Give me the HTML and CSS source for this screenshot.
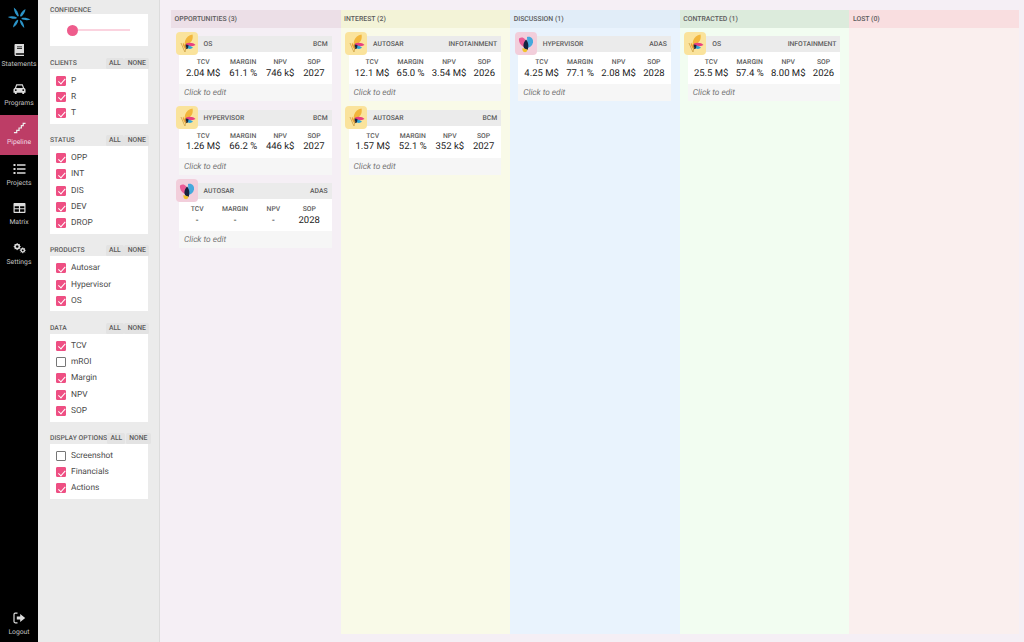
FILE: index.html
```html
<!DOCTYPE html>
<html lang="en">
<head>
<meta charset="utf-8">
<title>Pipeline</title>
<link rel="stylesheet" href="styles.css">
</head>
<body>
<svg class="defs" width="0" height="0" aria-hidden="true">
  <symbol id="mark-yellow" viewBox="0 0 22 23">
    <path d="M10 18C7 11 9 4 16.500 2.500C17.500 7 15.500 10 13 11.500Z" fill="#f2b63c"/>
    <path d="M9 17C7 14 6.500 12.500 7 10.500L10 15Z" fill="#eda33a"/>
    <path d="M10 11.500C13 10 17.500 10.500 19.500 13C16 14.800 12.500 14.500 10 13Z" fill="#e9407f"/>
    <path d="M11 13.500C13 13.500 15.500 14 17 15.800C15 17.300 13 17.300 11.500 16Z" fill="#2fa6d8"/>
    <path d="M9.500 12.500L12.500 13L12 16.500L10 17Z" fill="#16263f"/>
    <path d="M5 11L8 18L9 20M10 15L9 20" fill="none" stroke="#c89a3a" stroke-width=".7"/>
  </symbol>
  <symbol id="mark-pink" viewBox="0 0 22 23">
    <path d="M4 6.500C8 4 11 7 11.500 12L9 15C5.500 13.500 3.500 10 4 6.500Z" fill="#ea5c96"/>
    <path d="M12 5C16 4 18.500 7 18 10.500C17.500 13.500 15 15.500 12.500 16Z" fill="#45a9dc"/>
    <path d="M11 7.500C13.500 10 14 14.500 12.500 18C10 18 8 15.500 8.500 12.500C8.800 10.500 10 8.500 11 7.500Z" fill="#15233f"/>
    <path d="M7.500 16L12.500 17.500C12.500 19.500 10.800 20.500 9 20C7.800 19.500 7 18 7.500 16Z" fill="#f1c22f"/>
  </symbol>
</svg>
<div class="app">
  <nav class="rail">
    <div class="logo">
      <svg width="24" height="24" viewBox="0 0 24 24">
        <g fill="#2c95c9">
          <path d="M10.800 10.500C9 9 7 6 6.800 1.500C9.500 3.500 11.300 6.500 11.800 10Z"/>
          <path d="M13 10C13.500 7.500 15 4.800 18.500 3C18.300 6 16.500 9 14 10.700Z"/>
          <path d="M14.700 12C17 11.300 20 11.500 23.500 13.500C20.500 14.700 17 14.200 14.500 13Z"/>
          <path d="M13.600 14C15.500 15.500 17 18 17.300 22C15 20.500 13.200 17.500 12.800 14.500Z"/>
          <path d="M11.300 14.300C10.800 17 9.300 19.800 6 21.500C6.200 18.500 8 15.500 10.300 13.700Z"/>
          <path d="M9.500 12.400C7.500 13 4.200 13 .8 11C3.800 9.800 7.200 10.200 9.700 11.300Z"/>
        </g>
      </svg>
    </div>
    <a class="nav-item">
      <svg class="nav-icon" viewBox="0 0 12 12"><path fill="#ddd" d="M2 0H10.500V9.200H3C2.400 9.200 2.200 9.600 2.200 10S2.400 10.800 3 10.800H10.500V12H2.500C1.500 12 1 11.200 1 10.200V1.200C1 .5 1.400 0 2 0Z"/><path fill="#000" d="M3.500 2.500H8.500V3.300H3.500ZM3.500 4.300H8.500V5.100H3.500Z"/></svg>
      <span>Statements</span>
    </a>
    <a class="nav-item">
      <svg class="nav-icon" viewBox="0 0 14 12"><path fill="#ddd" d="M3.500 1H10.500L12 5C13 5.300 13.500 6 13.500 7V10H12V11.500H10V10H4V11.500H2V10H.5V7C.5 6 1 5.300 2 5ZM4.300 2.300L3.400 5H10.600L9.700 2.300ZM3 6.200A1 1 0 1 0 3 8.200A1 1 0 1 0 3 6.200ZM11 6.200A1 1 0 1 0 11 8.200A1 1 0 1 0 11 6.200Z" fill-rule="evenodd"/></svg>
      <span>Programs</span>
    </a>
    <a class="nav-item nav-active">
      <svg class="nav-icon" viewBox="0 0 14 12"><path fill="none" stroke="#eee" stroke-width="1.300" d="M1 11H4V8.500H6.500V6H9V3.500H11V1H13.500"/></svg>
      <span>Pipeline</span>
    </a>
    <a class="nav-item">
      <svg class="nav-icon" viewBox="0 0 13 12"><path fill="#ddd" d="M.5 1H2.500V3H.5ZM.5 5H2.500V7H.5ZM.5 9H2.500V11H.5ZM4 1.200H12.500V2.800H4ZM4 5.200H12.500V6.800H4ZM4 9.200H12.500V10.800H4Z"/></svg>
      <span>Projects</span>
    </a>
    <a class="nav-item">
      <svg class="nav-icon" viewBox="0 0 13 12"><path fill="#ddd" fill-rule="evenodd" d="M1.500 1H11.500C12.100 1 12.500 1.400 12.500 2V10C12.500 10.600 12.100 11 11.500 11H1.500C.9 11 .5 10.600 .5 10V2C.5 1.400 .9 1 1.500 1ZM1.700 4.200V6.200H5.900V4.200ZM7.100 4.200V6.200H11.300V4.200ZM1.700 7.300V9.800H5.900V7.300ZM7.100 7.300V9.800H11.300V7.300Z"/></svg>
      <span>Matrix</span>
    </a>
    <a class="nav-item">
      <svg class="nav-icon" viewBox="0 0 14 12">
        <circle cx="4.500" cy="4.500" r="2.400" fill="none" stroke="#ddd" stroke-width="1.600"/>
        <path d="M4.500 .7V8.300M.7 4.500H8.300M1.800 1.800L7.200 7.200M7.200 1.800L1.800 7.200" stroke="#ddd" stroke-width="1"/>
        <circle cx="4.500" cy="4.500" r="1.300" fill="#000"/>
        <circle cx="10.500" cy="8.500" r="1.900" fill="none" stroke="#ddd" stroke-width="1.400"/>
        <path d="M10.500 5.300V11.700M7.300 8.500H13.700M8.300 6.300L12.700 10.700M12.700 6.300L8.300 10.700" stroke="#ddd" stroke-width=".9"/>
        <circle cx="10.500" cy="8.500" r="1" fill="#000"/>
      </svg>
      <span>Settings</span>
    </a>
    <a class="nav-item nav-logout">
      <svg class="nav-icon" viewBox="0 0 13 12"><path fill="none" stroke="#ddd" stroke-width="1.200" d="M4.500 1.200H2.200C1.400 1.200 1 1.700 1 2.400V9.600C1 10.300 1.400 10.800 2.200 10.800H4.500"/><path fill="#ddd" d="M3.800 4.600H7.200V2L12.200 6L7.200 10V7.400H3.800Z"/></svg>
      <span>Logout</span>
    </a>
  </nav>

  <aside class="filters">
    <section class="filter">
      <header class="filter-head filter-head-plain"><h2>Confidence</h2></header>
      <div class="box slider-box">
        <span class="slider-thumb"></span>
        <span class="slider-track"></span>
      </div>
    </section>

    <section class="filter">
      <header class="filter-head"><h2>Clients</h2><div class="btns"><button>All</button><button>None</button></div></header>
      <div class="box">
        <label class="row"><i class="cb on"></i>P</label>
        <label class="row"><i class="cb on"></i>R</label>
        <label class="row"><i class="cb on"></i>T</label>
      </div>
    </section>

    <section class="filter">
      <header class="filter-head"><h2>Status</h2><div class="btns"><button>All</button><button>None</button></div></header>
      <div class="box">
        <label class="row"><i class="cb on"></i>OPP</label>
        <label class="row"><i class="cb on"></i>INT</label>
        <label class="row"><i class="cb on"></i>DIS</label>
        <label class="row"><i class="cb on"></i>DEV</label>
        <label class="row"><i class="cb on"></i>DROP</label>
      </div>
    </section>

    <section class="filter">
      <header class="filter-head"><h2>Products</h2><div class="btns"><button>All</button><button>None</button></div></header>
      <div class="box">
        <label class="row"><i class="cb on"></i>Autosar</label>
        <label class="row"><i class="cb on"></i>Hypervisor</label>
        <label class="row"><i class="cb on"></i>OS</label>
      </div>
    </section>

    <section class="filter">
      <header class="filter-head"><h2>Data</h2><div class="btns"><button>All</button><button>None</button></div></header>
      <div class="box">
        <label class="row"><i class="cb on"></i>TCV</label>
        <label class="row"><i class="cb"></i>mROI</label>
        <label class="row"><i class="cb on"></i>Margin</label>
        <label class="row"><i class="cb on"></i>NPV</label>
        <label class="row"><i class="cb on"></i>SOP</label>
      </div>
    </section>

    <section class="filter">
      <header class="filter-head"><h2>Display options</h2><div class="btns"><button>All</button><button>None</button></div></header>
      <div class="box">
        <label class="row"><i class="cb"></i>Screenshot</label>
        <label class="row"><i class="cb on"></i>Financials</label>
        <label class="row"><i class="cb on"></i>Actions</label>
      </div>
    </section>
  </aside>

  <main class="board">
    <div class="col col-opp">
      <h3 class="col-head">Opportunities (3)</h3>
      <div class="cards">
        <article class="card">
          <svg class="mark mark-y"><use href="#mark-yellow"/></svg>
          <div class="card-head"><span>OS</span><span>BCM</span></div>
          <div class="stats">
            <div class="stat"><b>TCV</b><span>2.04 M$</span></div>
            <div class="stat"><b>Margin</b><span>61.1 %</span></div>
            <div class="stat"><b>NPV</b><span>746 k$</span></div>
            <div class="stat"><b>SOP</b><span>2027</span></div>
          </div>
          <div class="note">Click to edit</div>
        </article>
        <article class="card">
          <svg class="mark mark-y"><use href="#mark-yellow"/></svg>
          <div class="card-head"><span>Hypervisor</span><span>BCM</span></div>
          <div class="stats">
            <div class="stat"><b>TCV</b><span>1.26 M$</span></div>
            <div class="stat"><b>Margin</b><span>66.2 %</span></div>
            <div class="stat"><b>NPV</b><span>446 k$</span></div>
            <div class="stat"><b>SOP</b><span>2027</span></div>
          </div>
          <div class="note">Click to edit</div>
        </article>
        <article class="card">
          <svg class="mark mark-p"><use href="#mark-pink"/></svg>
          <div class="card-head"><span>Autosar</span><span>ADAS</span></div>
          <div class="stats">
            <div class="stat"><b>TCV</b><span>-</span></div>
            <div class="stat"><b>Margin</b><span>-</span></div>
            <div class="stat"><b>NPV</b><span>-</span></div>
            <div class="stat"><b>SOP</b><span>2028</span></div>
          </div>
          <div class="note">Click to edit</div>
        </article>
      </div>
    </div>

    <div class="col col-int">
      <h3 class="col-head">Interest (2)</h3>
      <div class="cards">
        <article class="card">
          <svg class="mark mark-y"><use href="#mark-yellow"/></svg>
          <div class="card-head"><span>Autosar</span><span>Infotainment</span></div>
          <div class="stats">
            <div class="stat"><b>TCV</b><span>12.1 M$</span></div>
            <div class="stat"><b>Margin</b><span>65.0 %</span></div>
            <div class="stat"><b>NPV</b><span>3.54 M$</span></div>
            <div class="stat"><b>SOP</b><span>2026</span></div>
          </div>
          <div class="note">Click to edit</div>
        </article>
        <article class="card">
          <svg class="mark mark-y"><use href="#mark-yellow"/></svg>
          <div class="card-head"><span>Autosar</span><span>BCM</span></div>
          <div class="stats">
            <div class="stat"><b>TCV</b><span>1.57 M$</span></div>
            <div class="stat"><b>Margin</b><span>52.1 %</span></div>
            <div class="stat"><b>NPV</b><span>352 k$</span></div>
            <div class="stat"><b>SOP</b><span>2027</span></div>
          </div>
          <div class="note">Click to edit</div>
        </article>
      </div>
    </div>

    <div class="col col-dis">
      <h3 class="col-head">Discussion (1)</h3>
      <div class="cards">
        <article class="card">
          <svg class="mark mark-p"><use href="#mark-pink"/></svg>
          <div class="card-head"><span>Hypervisor</span><span>ADAS</span></div>
          <div class="stats">
            <div class="stat"><b>TCV</b><span>4.25 M$</span></div>
            <div class="stat"><b>Margin</b><span>77.1 %</span></div>
            <div class="stat"><b>NPV</b><span>2.08 M$</span></div>
            <div class="stat"><b>SOP</b><span>2028</span></div>
          </div>
          <div class="note">Click to edit</div>
        </article>
      </div>
    </div>

    <div class="col col-con">
      <h3 class="col-head">Contracted (1)</h3>
      <div class="cards">
        <article class="card">
          <svg class="mark mark-y"><use href="#mark-yellow"/></svg>
          <div class="card-head"><span>OS</span><span>Infotainment</span></div>
          <div class="stats">
            <div class="stat"><b>TCV</b><span>25.5 M$</span></div>
            <div class="stat"><b>Margin</b><span>57.4 %</span></div>
            <div class="stat"><b>NPV</b><span>8.00 M$</span></div>
            <div class="stat"><b>SOP</b><span>2026</span></div>
          </div>
          <div class="note">Click to edit</div>
        </article>
      </div>
    </div>

    <div class="col col-lost">
      <h3 class="col-head">Lost (0)</h3>
      <div class="cards"></div>
    </div>
  </main>
</div>
</body>
</html>
```

FILE: styles.css
```css
* { box-sizing: border-box; }
html, body { margin: 0; height: 100%; }
body {
  font-family: Roboto, "Liberation Sans", sans-serif;
  background: #f5eff5;
  color: #333;
  overflow: hidden;
  text-rendering: geometricPrecision;
}
.defs { position: absolute; }
.app { display: flex; height: 642px; }

/* icon rail */
.rail {
  width: 38px;
  flex: none;
  background: #000;
  display: flex;
  flex-direction: column;
}
.logo {
  height: 36px;
  display: flex;
  align-items: center;
  justify-content: center;
}
.nav-item {
  height: 39.7px;
  display: flex;
  flex-direction: column;
  align-items: center;
  justify-content: flex-end;
  gap: 4px;
  padding-bottom: 8px;
  color: #c4c4c4;
  font-size: 6.8px;
  line-height: 8px;
}
.nav-icon { width: 13px; height: 12px; }
.nav-active { background: #bd3d66; color: #f2d9e2; padding-bottom: 9px; }
.nav-logout { margin-top: auto; padding-bottom: 6px; }

/* filter panel */
.filters {
  width: 122px;
  flex: none;
  background: #ebebeb;
  border-right: 1px solid #dcdcdc;
  padding: 3px 11px 0 12px;
}
.filter { margin-bottom: 10.2px; }
.filter-head {
  height: 12.3px;
  margin-right: -1px;
  display: flex;
  justify-content: space-between;
  align-items: flex-end;
}
.filter-head-plain { height: 11.4px; }
.filter-head h2 {
  margin: 0 0 2px;
  font-size: 6.8px;
  line-height: 8px;
  font-weight: 500;
  text-transform: uppercase;
  color: #5c5c5c;
  white-space: nowrap;
}
.filter-head-plain h2 { margin-bottom: 0; }
.btns { display: flex; gap: .5px; }
.btns button {
  height: 11px;
  padding: 0 3.2px;
  border: 0;
  border-radius: 1.500px;
  background: #e3e3e3;
  font: 500 6.8px/11px Roboto, sans-serif;
  text-transform: uppercase;
  color: #5c5c5c;
}
.box { background: #fff; padding: 3.6px 0 2.4px; }
.row {
  height: 16.340px;
  display: flex;
  align-items: center;
  gap: 5px;
  padding-left: 6px;
  font-size: 8.400px;
  color: #4a4a4a;
}
.cb {
  position: relative;
  width: 10px;
  height: 10px;
  flex: none;
  border: 1px solid #777;
  border-radius: 1px;
  background: #fff;
}
.cb.on { background: #ee4f83; border-color: #ee4f83; }
.cb.on::after {
  content: "";
  position: absolute;
  left: 2.500px;
  top: .5px;
  width: 3px;
  height: 5.500px;
  border: solid #fff;
  border-width: 0 1px 1px 0;
  transform: rotate(42deg);
}
.slider-box {
  height: 32px;
  padding: 0 18px 0 17px;
  display: flex;
  align-items: center;
}
.slider-thumb {
  width: 11px;
  height: 11px;
  flex: none;
  border-radius: 50%;
  background: #ee5c8c;
}
.slider-track {
  flex: 1;
  height: 2px;
  background: #fbd3df;
}

/* kanban board */
.board {
  flex: 1;
  display: flex;
  min-width: 0;
  padding: 10px 5px 8px 11px;
}
.col { flex: 1 1 0; min-width: 0; display: flex; flex-direction: column; }
.col-head {
  margin: 0;
  height: 18px;
  padding: 0 3.5px;
  font-size: 6.9px;
  line-height: 18px;
  font-weight: 500;
  text-transform: uppercase;
  color: #5c5c5c;
  white-space: nowrap;
}
.cards {
  flex: 1;
  display: flex;
  flex-direction: column;
  gap: 8.500px;
  padding: 8px 9px 0 8px;
}
.col-opp { background: #f5eff5; }
.col-opp .col-head { background: #ecdfe7; }
.col-int { background: #f9fae8; }
.col-int .col-head { background: #f3f3d7; }
.col-dis { background: #e9f3fd; }
.col-dis .col-head { background: #e1edf8; }
.col-con { background: #f2fdf1; }
.col-con .col-head { background: #dcebdc; }
.col-lost { background: #faefee; }
.col-lost .col-head { background: #f9dee0; }

.card { position: relative; }
.mark {
  position: absolute;
  left: -3.500px;
  top: -4px;
  width: 22px;
  height: 23px;
  border-radius: 4px;
}
.mark-y { background: #fae39c; }
.mark-p { background: #f2cedb; }
.card-head {
  height: 16px;
  padding: 0 4px 0 24.500px;
  background: #ebebeb;
  display: flex;
  justify-content: space-between;
  align-items: center;
  font-size: 6.800px;
  font-weight: 500;
  text-transform: uppercase;
  color: #5c5c5c;
}
.stats {
  height: 32px;
  padding: 1px 2.500px 0;
  background: #fff;
  display: flex;
  justify-content: space-around;
  align-items: center;
}
.stat {
  display: flex;
  flex-direction: column;
  align-items: center;
  gap: 1.500px;
}
.stat b {
  font-size: 6.800px;
  line-height: 8px;
  font-weight: 500;
  text-transform: uppercase;
  color: #5c5c5c;
}
.stat span {
  font-size: 9.500px;
  line-height: 11px;
  color: #222;
  white-space: nowrap;
}
.note {
  height: 17px;
  padding: 1px 0 0 5px;
  background: #f6f6f6;
  font-size: 8.300px;
  line-height: 16px;
  font-style: italic;
  color: #777;
}
```
